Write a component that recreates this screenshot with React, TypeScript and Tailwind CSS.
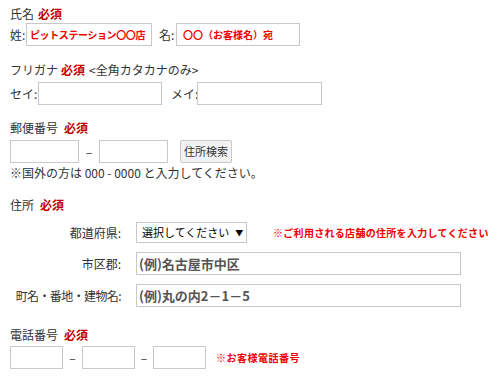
const font = "font-['Noto_Sans_CJK_JP','Noto_Sans',sans-serif]";

function Req({ gap = "ml-[4px]" }: { gap?: string }) {
  return <span className={`${gap} font-bold text-[#c00000]`}>必須</span>;
}

function Box({ w, className = "", children }: { w: string; className?: string; children?: React.ReactNode }) {
  return (
    <div className={`${w} h-[23px] border border-[#c8c8c8] bg-white flex items-center shrink-0 overflow-hidden whitespace-nowrap ${className}`}>
      {children}
    </div>
  );
}

export default function App() {
  return (
    <div className={`w-[500px] h-[382px] overflow-hidden bg-white pl-[10px] text-[12px] text-[#333] whitespace-nowrap ${font}`}>
      {/* 氏名 */}
      <div className="pt-[5px] h-[23px] leading-[18px]">
        氏名<Req />
      </div>
      <div className="flex items-center h-[23px]">
        <span className="w-[16px] shrink-0">姓:</span>
        <Box w="w-[126px]" className="pl-[3px]">
          <span className="text-[10px] tracking-[-0.4px] font-bold text-[#f00000]">ピットステーション〇〇店</span>
        </Box>
        <span className="ml-[7px] w-[17px] shrink-0">名:</span>
        <Box w="w-[124px]" className="pl-[6px]">
          <span className="text-[10px] font-bold text-[#f00000]">〇〇（お客様名）宛</span>
        </Box>
      </div>

      {/* フリガナ */}
      <div className="mt-[15px] h-[18px] leading-[18px]">
        フリガナ<Req gap="ml-[3px]" /><span className="ml-[4px]">&lt;全角カタカナのみ&gt;</span>
      </div>
      <div className="mt-[3px] flex items-center h-[23px]">
        <span className="w-[28px] shrink-0">セイ:</span>
        <Box w="w-[124px]" />
        <span className="ml-[9px] w-[26px] shrink-0">メイ:</span>
        <Box w="w-[125px]" />
      </div>

      {/* 郵便番号 */}
      <div className="mt-[14px] h-[18px] leading-[18px]">
        郵便番号<Req gap="ml-[6px]" />
      </div>
      <div className="mt-[3px] flex items-center h-[23px]">
        <Box w="w-[69px]" />
        <span className="w-[20px] text-center shrink-0">–</span>
        <Box w="w-[69px]" />
        <div className="ml-[12px] w-[52px] h-[23px] shrink-0 border border-[#c8c8c8] rounded-[2px] bg-[#f2f2f2] flex items-center justify-center text-[11px]">
          住所検索
        </div>
      </div>
      <div className="mt-[1px] h-[18px] leading-[18px]">
        ※国外の方は 000 - 0000 と入力してください。
      </div>

      {/* 住所 */}
      <div className="mt-[14px] h-[18px] leading-[18px]">
        住所<Req gap="ml-[6px]" />
      </div>
      <div className="mt-[8px] flex items-center h-[21px]">
        <span className="w-[111px] shrink-0 flex justify-end">都道府県:</span>
        <div className="ml-[15px] w-[111px] h-[21px] shrink-0 border border-[#c8c8c8] bg-white flex items-center pl-[5px] text-[11px] text-black">
          選択してください
          <span className="ml-[6px] text-[8px]">▼</span>
        </div>
        <span className="ml-[26px] text-[10px] tracking-[0.3px] font-bold text-[#f00000]">
          ※ご利用される店舗の住所を入力してください
        </span>
      </div>
      <div className="mt-[9px] flex items-center h-[23px]">
        <span className="w-[111px] shrink-0 flex justify-end">市区郡:</span>
        <Box w="w-[325px] ml-[15px]" className="pl-[2px]">
          <span className="text-[13px] font-bold text-[#555]">(例)名古屋市中区</span>
        </Box>
      </div>
      <div className="mt-[9px] flex items-center h-[23px]">
        <span className="w-[111px] shrink-0 flex justify-end tracking-[-0.6px]">町名・番地・建物名:</span>
        <Box w="w-[325px] ml-[15px]" className="pl-[2px]">
          <span className="text-[13px] font-bold text-[#555]">(例)丸の内2－1－5</span>
        </Box>
      </div>

      {/* 電話番号 */}
      <div className="mt-[19px] h-[18px] leading-[18px]">
        電話番号<Req gap="ml-[6px]" />
      </div>
      <div className="mt-[2px] flex items-center h-[23px]">
        <Box w="w-[53px]" />
        <span className="w-[19px] text-center shrink-0">–</span>
        <Box w="w-[53px]" />
        <span className="w-[18px] text-center shrink-0">–</span>
        <Box w="w-[53px]" />
        <span className="ml-[10px] text-[10px] tracking-[0.5px] font-bold text-[#f00000]">※お客様電話番号</span>
      </div>
    </div>
  );
}
